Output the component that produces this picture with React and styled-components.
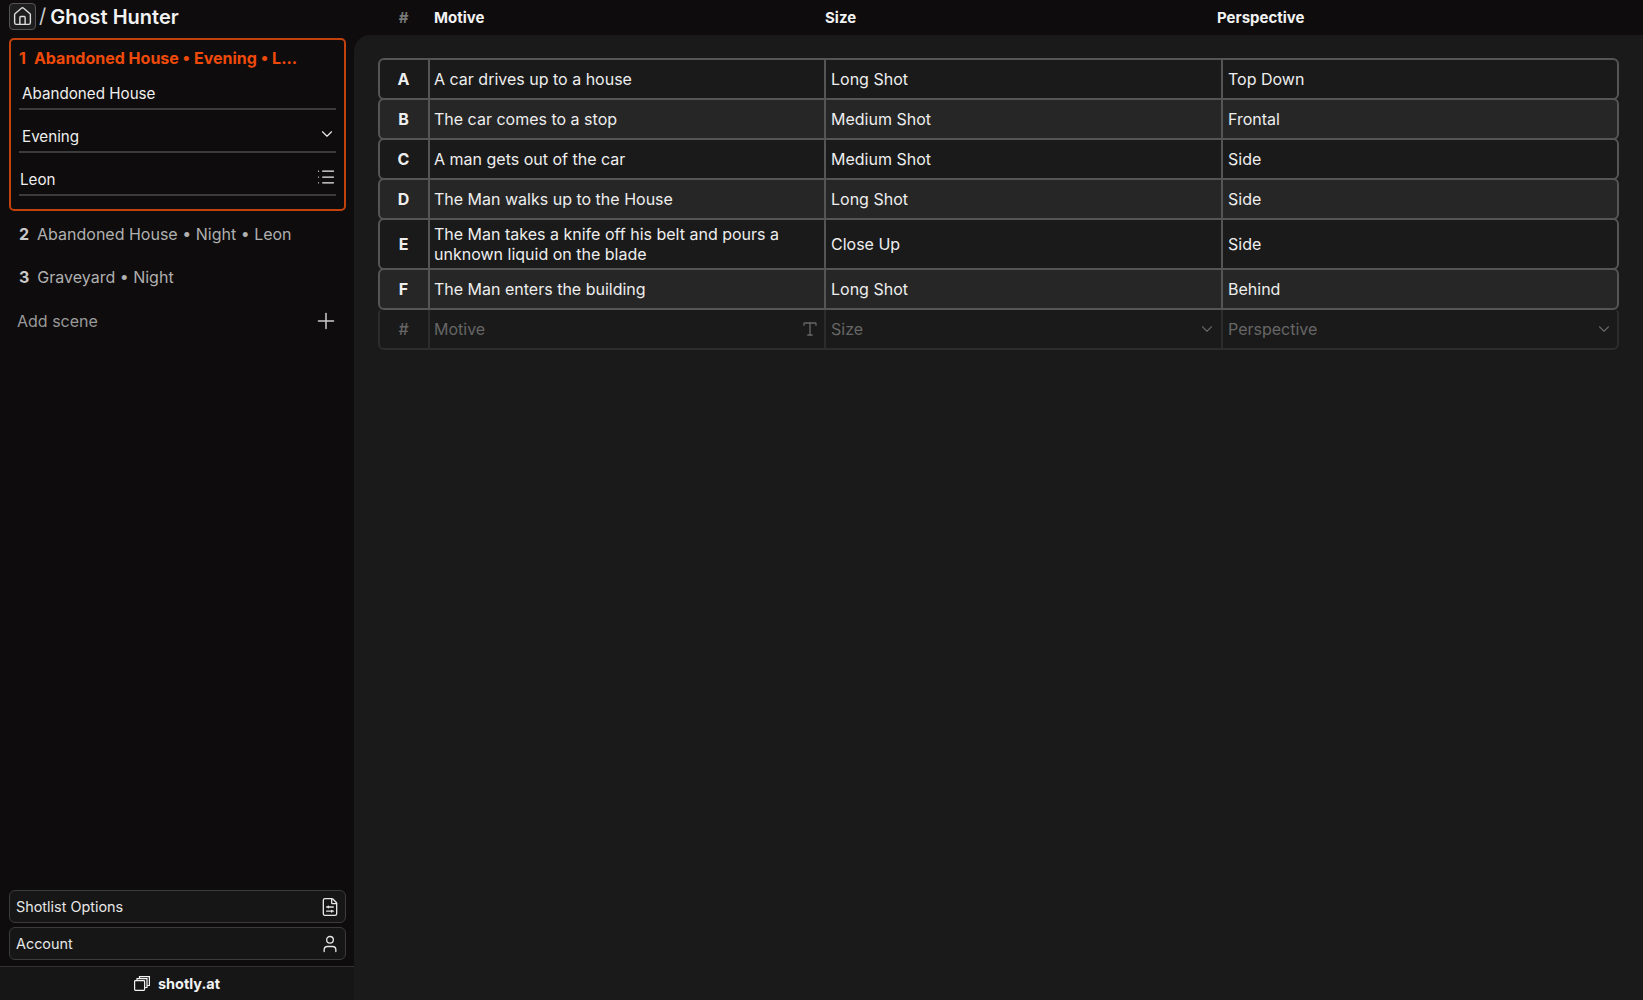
import React from 'react';
import styled, { createGlobalStyle } from 'styled-components';
import { Home, ChevronDown, List, Plus, FileSliders, User, Type } from 'lucide-react';

const GlobalStyle = createGlobalStyle`
  html, body {
    margin: 0;
    padding: 0;
    background: #0e0c0c;
    font-family: Inter, "Liberation Sans", sans-serif;
    color: #f2f2f2;
  }
  * { box-sizing: border-box; }
`;

const Page = styled.div`
  display: grid;
  grid-template-columns: 354px 1fr;
  grid-template-rows: 35px 1fr;
  width: 100%;
  height: 100vh;
  overflow: hidden;
  background: #0e0c0c;
`;

const Sidebar = styled.aside`
  grid-row: 1 / 3;
  display: flex;
  flex-direction: column;
  min-height: 0;
`;

const TitleBar = styled.div`
  display: flex;
  align-items: center;
  height: 38px;
  padding: 0 0 6px 9px;
  gap: 3px;
`;

const HomeButton = styled.div`
  width: 27px;
  height: 27px;
  display: flex;
  align-items: center;
  justify-content: center;
  border: 1px solid #555;
  border-radius: 4px;
  background: #1e1e1e;
  color: #ddd;
`;

const Slash = styled.span`
  font-size: 20px;
  color: #ccc;
`;

const Title = styled.h1`
  margin: 2px 0 0 1px;
  font-size: 20px;
  font-weight: 600;
`;

const SceneBox = styled.div`
  margin: 0 8px 0 9px;
  height: 173px;
  border: 2px solid #c2410c;
  border-radius: 5px;
  padding: 6px 8px 0 8px;
  display: flex;
  flex-direction: column;
`;

const SceneHead = styled.div`
  display: flex;
  gap: 8px;
  height: 24px;
  align-items: center;
  color: #ef4a0b;
  font-size: 16px;
  font-weight: 700;
  white-space: nowrap;
`;

const Field = styled.div`
  height: 43px;
  display: flex;
  align-items: center;
  justify-content: space-between;
  padding: 11px 0 0 ${(p) => p.$indent}px;
  border-bottom: 2px solid #3c3c3c;
  font-size: 15.2px;
  color: #eee;
  svg { margin-top: -4px; }
`;

const FirstField = styled(Field)`
  height: 40px;
  padding-top: 8px;
`;

const SceneList = styled.div`
  display: flex;
  flex-direction: column;
  padding-top: 1px;
`;

const SceneRow = styled.div`
  display: flex;
  gap: 8px;
  align-items: center;
  height: 43.5px;
  padding-left: 19px;
  font-size: 16px;
  color: #b0b0b0;
  b {
    font-weight: 700;
    color: #c9c9c9;
  }
`;

const AddRow = styled.div`
  display: flex;
  align-items: center;
  justify-content: space-between;
  height: 43.5px;
  padding: 0 15px 0 17px;
  font-size: 16px;
  color: #9a9a9a;
  svg { color: #ccc; }
`;

const Spacer = styled.div`
  flex: 1;
`;

const OptionButton = styled.div`
  margin: 0 8px 4px 9px;
  height: 33px;
  display: flex;
  align-items: center;
  justify-content: space-between;
  padding: 0 5px 0 6px;
  border: 1px solid #3c3c3c;
  border-radius: 6px;
  background: #161616;
  font-size: 14.4px;
  color: #e6e6e6;
`;

const Brand = styled.div`
  margin-top: 2px;
  height: 34px;
  display: flex;
  align-items: center;
  justify-content: center;
  gap: 8px;
  border-top: 1px solid #333;
  background: #161616;
  font-size: 14.5px;
  font-weight: 700;
`;

const HeaderBar = styled.div`
  display: grid;
  grid-template-columns: 51px 391px 397px 1fr;
  padding: 0 0 1px 24px;
  align-items: center;
  font-size: 15px;
  font-weight: 700;
  span:first-child {
    text-align: center;
    color: #777;
  }
  span:nth-child(2) { padding-left: 5px; }
  span:nth-child(3) { padding-left: 5px; }
`;

const Main = styled.main`
  background: #1a1a1a;
  border-top-left-radius: 16px;
  padding: 23px 24px 0 24px;
  min-height: 0;
`;

const TableRow = styled.div`
  display: grid;
  grid-template-columns: 48px 396px 397px 1fr;
  min-height: 42px;
  margin-top: -2px;
  border: 2px solid #555;
  border-radius: 6px;
  background: ${(p) => (p.$alt ? '#262626' : '#1a1a1a')};
  &:first-child { margin-top: 0; }
`;

const AddTableRow = styled(TableRow)`
  border-color: transparent #2c2c2c #2c2c2c #2c2c2c;
  background: transparent;
`;

const Cell = styled.div`
  display: flex;
  align-items: center;
  justify-content: space-between;
  padding: 4px 5px 4px 4px;
  font-size: 16px;
  line-height: 20px;
  border-left: 2px solid ${(p) => (p.$add ? '#2c2c2c' : '#555')};
  color: ${(p) => (p.$add ? '#666' : '#eee')};
  svg { flex-shrink: 0; }
  & + & { padding-left: 5px; }
  &:last-child { padding-right: 4px; }
`;

const IdCell = styled.div`
  display: flex;
  align-items: center;
  justify-content: center;
  padding-right: 1px;
  font-size: 16px;
  font-weight: ${(p) => (p.$add ? 500 : 700)};
  color: ${(p) => (p.$add ? '#666' : '#eee')};
`;

const shots = [
  ['A', 'A car drives up to a house', 'Long Shot', 'Top Down'],
  ['B', 'The car comes to a stop', 'Medium Shot', 'Frontal'],
  ['C', 'A man gets out of the car', 'Medium Shot', 'Side'],
  ['D', 'The Man walks up to the House', 'Long Shot', 'Side'],
  ['E', 'The Man takes a knife off his belt and pours a unknown liquid on the blade', 'Close Up', 'Side'],
  ['F', 'The Man enters the building', 'Long Shot', 'Behind'],
];

const PagesIcon = () => (
  <svg width="16" height="15" viewBox="0 0 16 15" fill="none" stroke="currentColor" strokeWidth="1.2">
    <rect x="0.6" y="4.6" width="10" height="9.8" rx="0.8" />
    <path d="M3 4.5V2.6H13V11.5H10.8" />
    <path d="M5.5 2.5V0.6H15.4V9.5H13" />
  </svg>
);

function App() {
  return (
    <Page>
      <GlobalStyle />
      <Sidebar>
        <TitleBar>
          <HomeButton><Home size={21} strokeWidth={1.6} /></HomeButton>
          <Slash>/</Slash>
          <Title>Ghost Hunter</Title>
        </TitleBar>
        <SceneBox>
          <SceneHead><span>1</span><span>Abandoned House • Evening • L...</span></SceneHead>
          <FirstField $indent={3}>Abandoned House</FirstField>
          <Field $indent={3}>Evening<ChevronDown size={18} strokeWidth={1.5} /></Field>
          <Field $indent={1}>Leon<List size={20} strokeWidth={1.5} /></Field>
        </SceneBox>
        <SceneList>
          <SceneRow><b>2</b>Abandoned House • Night • Leon</SceneRow>
          <SceneRow><b>3</b>Graveyard • Night</SceneRow>
          <AddRow>Add scene<Plus size={26} strokeWidth={1.4} /></AddRow>
        </SceneList>
        <Spacer />
        <OptionButton>Shotlist Options<FileSliders size={20} strokeWidth={1.6} /></OptionButton>
        <OptionButton>Account<User size={20} strokeWidth={1.6} /></OptionButton>
        <Brand><PagesIcon />shotly.at</Brand>
      </Sidebar>
      <HeaderBar>
        <span>#</span>
        <span>Motive</span>
        <span>Size</span>
        <span>Perspective</span>
      </HeaderBar>
      <Main>
        {shots.map((s, i) => (
          <TableRow key={s[0]} $alt={i % 2 === 1}>
            <IdCell>{s[0]}</IdCell>
            <Cell>{s[1]}</Cell>
            <Cell>{s[2]}</Cell>
            <Cell>{s[3]}</Cell>
          </TableRow>
        ))}
        <AddTableRow>
          <IdCell $add>#</IdCell>
          <Cell $add>Motive<Type size={18} strokeWidth={1.8} /></Cell>
          <Cell $add>Size<ChevronDown size={18} strokeWidth={1.5} /></Cell>
          <Cell $add>Perspective<ChevronDown size={18} strokeWidth={1.5} /></Cell>
        </AddTableRow>
      </Main>
    </Page>
  );
}

export default App;
